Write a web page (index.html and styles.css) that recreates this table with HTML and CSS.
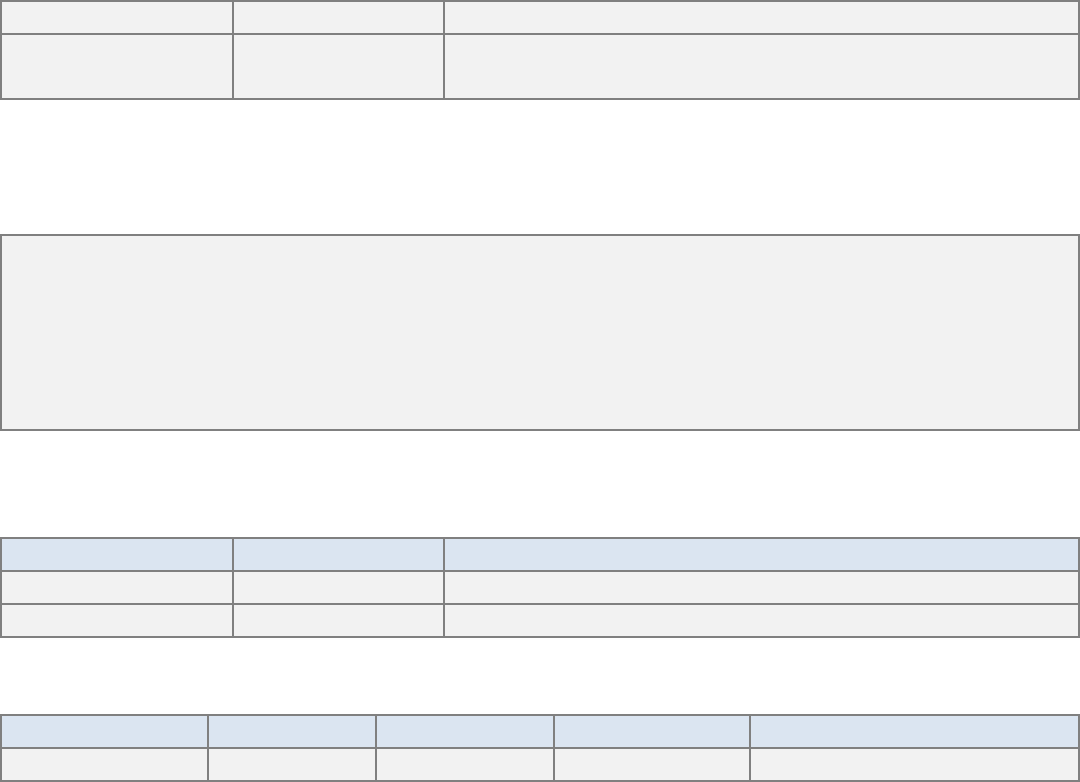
FILE: index.html
```html
<!DOCTYPE html>
<html>
<head>
<meta charset="utf-8">
<link rel="stylesheet" href="styles.css">
</head>
<body>
<main class="page">
  <div class="grid grid-a">
    <div class="cell"></div><div class="cell"></div><div class="cell"></div>
    <div class="cell"></div><div class="cell"></div><div class="cell"></div>
  </div>
  <div class="box"></div>
  <div class="grid grid-b">
    <div class="cell head"></div><div class="cell head"></div><div class="cell head"></div>
    <div class="cell"></div><div class="cell"></div><div class="cell"></div>
    <div class="cell"></div><div class="cell"></div><div class="cell"></div>
  </div>
  <div class="grid grid-c">
    <div class="cell head"></div><div class="cell head"></div><div class="cell head"></div><div class="cell head"></div><div class="cell head"></div>
    <div class="cell"></div><div class="cell"></div><div class="cell"></div><div class="cell"></div><div class="cell"></div>
  </div>
</main>
</body>
</html>
```

FILE: styles.css
```css
html, body {
  margin: 0;
  padding: 0;
  background: #ffffff;
  font-family: "Liberation Sans", Arial, sans-serif;
}
.page {
  width: 1080px;
  display: flex;
  flex-direction: column;
}
.grid {
  display: grid;
  gap: 2px;
  padding: 2px;
  background: #808080;
}
.cell {
  background: #f2f2f2;
}
.cell.head {
  background: #dbe5f1;
}
.grid-a {
  grid-template-columns: 230px 209px 633px;
  grid-template-rows: 31px 63px;
}
.box {
  margin-top: 134px;
  height: 193px;
  border: 2px solid #808080;
  background: #f2f2f2;
}
.grid-b {
  margin-top: 106px;
  grid-template-columns: 230px 209px 633px;
  grid-template-rows: 31px 31px 31px;
}
.grid-c {
  margin-top: 76px;
  grid-template-columns: 205px 166px 176px 194px 327px;
  grid-template-rows: 31px 31px;
}
```
